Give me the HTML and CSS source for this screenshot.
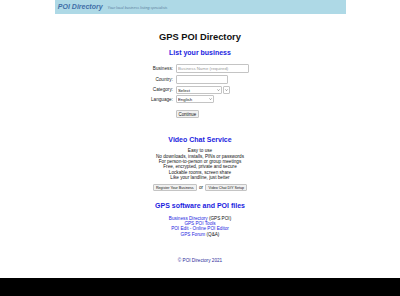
FILE: index.html
```html
<!DOCTYPE html>
<html lang="en">
<head>
<meta charset="utf-8">
<title>GPS POI Directory</title>
<link rel="stylesheet" href="styles.css">
</head>
<body>
<header class="topbar">
  <span class="brand">POI Directory</span>
  <span class="tagline">Your local business listing specialists</span>
</header>

<main class="page">
  <h1 class="title">GPS POI Directory</h1>

  <h2 class="section-title first">List your business</h2>
  <form class="listing-form">
    <div class="row row-business">
      <label class="lbl" for="biz">Business:</label>
      <input class="field field-business" id="biz" type="text" placeholder="Business Name (required)">
    </div>
    <div class="row row-country">
      <label class="lbl" for="country">Country:</label>
      <input class="field field-country" id="country" type="text">
    </div>
    <div class="row row-category">
      <label class="lbl" for="cat">Category:</label>
      <span class="select-wrap wrap-category">
        <select class="sel" id="cat"><option>Select</option></select>
        <svg class="chev" viewBox="0 0 6 4" aria-hidden="true"><path d="M0.6 0.8 L3 3.2 L5.4 0.8" fill="none" stroke="#333" stroke-width="0.9"/></svg>
      </span>
      <span class="select-wrap wrap-sub">
        <select class="sel" aria-label="Subcategory"><option></option></select>
        <svg class="chev" viewBox="0 0 6 4" aria-hidden="true"><path d="M0.6 0.8 L3 3.2 L5.4 0.8" fill="none" stroke="#333" stroke-width="0.9"/></svg>
      </span>
    </div>
    <div class="row row-language">
      <label class="lbl" for="lang">Language:</label>
      <span class="select-wrap wrap-language">
        <select class="sel" id="lang"><option>English</option></select>
        <svg class="chev" viewBox="0 0 6 4" aria-hidden="true"><path d="M0.6 0.8 L3 3.2 L5.4 0.8" fill="none" stroke="#333" stroke-width="0.9"/></svg>
      </span>
    </div>
    <div class="row row-submit">
      <span class="lbl"></span>
      <button class="btn btn-continue" type="button">Continue</button>
    </div>
  </form>

  <h2 class="section-title video">Video Chat Service</h2>
  <p class="features">
    Easy to use<br>
    No downloads, installs, PINs or passwords<br>
    For person-to-person or group meetings<br>
    Free, encrypted, private and secure<br>
    Lockable rooms, screen share<br>
    Like your landline, just better
  </p>
  <div class="actions">
    <button class="btn btn-small" type="button">Register Your Business</button>
    <span class="or">or</span>
    <button class="btn btn-small" type="button">Video Chat DIY Setup</button>
  </div>

  <h2 class="section-title gps">GPS software and POI files</h2>
  <ul class="links">
    <li><a href="#">Business Directory</a> (GPS POI)</li>
    <li><a href="#">GPS POI Tools</a></li>
    <li><a href="#">POI Edit - Online POI Editor</a></li>
    <li><a href="#">GPS Forum</a> (Q&amp;A)</li>
  </ul>

  <footer class="copyright">© POI Directory 2021</footer>
</main>
</body>
</html>
```

FILE: styles.css
```css
html {
  background: #000;
}

body {
  margin: 0;
  background: #fff;
  font-family: "Liberation Sans", Arial, sans-serif;
  font-size: 4.667px;
  line-height: 5.333px;
  color: #111;
  padding-bottom: 14.667px;
}

.topbar {
  width: 291px;
  height: 14px;
  box-sizing: border-box;
  margin: 0 auto;
  padding: 2.667px 0 0 3.333px;
  background: #aed9e6;
  display: flex;
  align-items: baseline;
  gap: 5px;
}

.brand {
  font-size: 7px;
  line-height: 8px;
  font-weight: bold;
  font-style: italic;
  color: #3f6ea6;
}

.tagline {
  font-size: 3.667px;
  font-style: italic;
  color: #5f7f9e;
}

.page {
  text-align: center;
}

.title {
  margin: 18.333px 0 0;
  font-size: 9.333px;
  line-height: 10.667px;
  font-weight: bold;
  color: #111;
}

.section-title {
  font-size: 7px;
  line-height: 8px;
  font-weight: bold;
  color: #1c1ce0;
  margin: 0;
}

.section-title.first { margin-top: 5.667px; }
.section-title.video { margin-top: 17.667px; }
.section-title.gps { margin-top: 11px; }

.listing-form {
  width: 98.667px;
  margin: 7px auto 0;
  text-align: left;
}

.row {
  display: flex;
  align-items: center;
  gap: 2.667px;
}

.lbl {
  width: 22.333px;
  flex: none;
  text-align: right;
  color: #222;
}

.row-business { height: 9.333px; margin-bottom: 2.333px; }
.row-country { height: 8.667px; margin-bottom: 2px; }
.row-category { height: 8.333px; margin-bottom: 1px; }
.row-language { height: 8px; }
.row-submit { height: 8.333px; margin-top: 6.667px; }

.field {
  box-sizing: border-box;
  border: 1px solid #c4c4c4;
  border-radius: 1px;
  padding: 0 1.333px;
  font-family: "Liberation Sans", Arial, sans-serif;
  font-size: 4.333px;
  background: #fff;
  outline: none;
}

.field::placeholder { color: #9a9a9a; }

.field-business { width: 73.667px; height: 9.333px; }
.field-country { width: 52.667px; height: 8.667px; }

.select-wrap {
  position: relative;
  display: inline-block;
  height: 8px;
}

.sel {
  appearance: none;
  -webkit-appearance: none;
  box-sizing: border-box;
  width: 100%;
  height: 100%;
  margin: 0;
  padding: 0 1.333px;
  font-family: "Liberation Sans", Arial, sans-serif;
  font-size: 4.333px;
  border: 1px solid #c4c4c4;
  border-radius: 1px;
  background: #fff;
  color: #111;
  display: block;
}

.chev {
  position: absolute;
  top: 50%;
  right: 1.6px;
  width: 3px;
  height: 2px;
  margin-top: -1px;
  pointer-events: none;
}

.wrap-category { width: 46.333px; height: 8.333px; }
.wrap-sub { width: 6.667px; height: 8.333px; margin-left: -1.333px; }
.wrap-sub .chev { right: 1.8px; }
.wrap-language { width: 38.333px; }

.btn {
  box-sizing: border-box;
  font-family: "Liberation Sans", Arial, sans-serif;
  border: 1px solid #c4c4c4;
  border-radius: 1px;
  background: #f1f1f1;
  color: #111;
  margin: 0;
}

.btn-continue {
  width: 23.333px;
  height: 8.333px;
  font-size: 4.444px;
  padding: 0;
}

.features {
  margin: 4.333px 0 0;
}

.actions {
  margin-top: 4px;
  height: 6.667px;
  display: flex;
  justify-content: center;
  align-items: center;
  gap: 2.333px;
}

.btn-small {
  height: 6.667px;
  font-size: 3.667px;
  padding: 0 2px;
}

.links {
  list-style: none;
  margin: 5.667px 0 0;
  padding: 0;
}

.links a {
  color: #1c1ce0;
  text-decoration: none;
}

.copyright {
  margin-top: 21px;
  color: #2a2a9a;
}
```
